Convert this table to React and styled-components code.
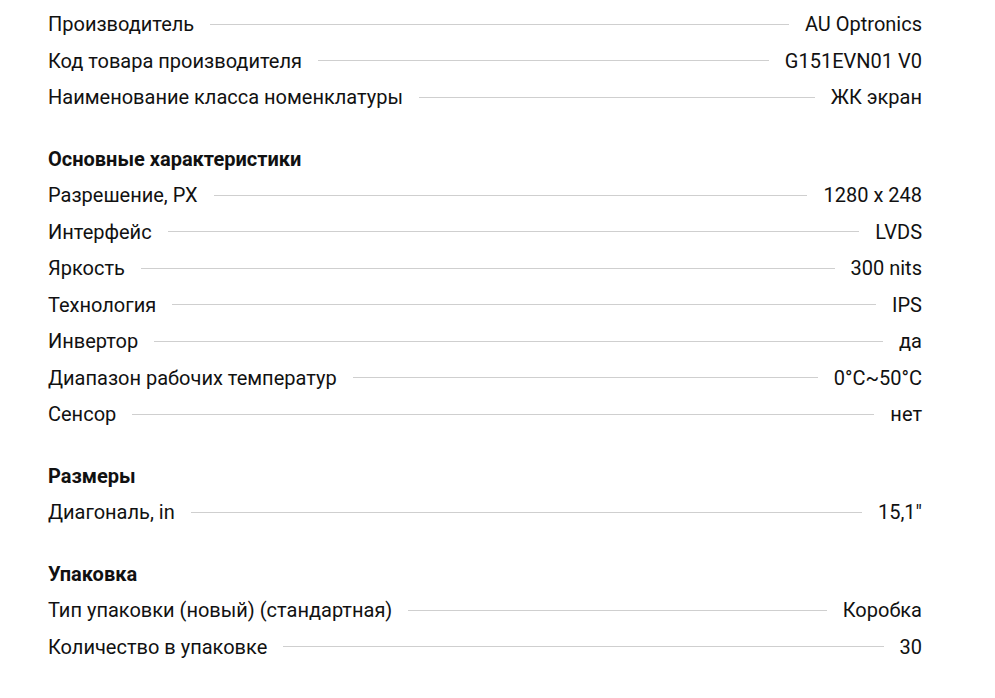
import React from 'react';
import styled, {createGlobalStyle} from 'styled-components';

const GlobalStyle = createGlobalStyle`
  body {
    margin:0;
    background:#fff;
    font-family:Roboto, "Noto Sans", sans-serif;
    color:#111;
  }
`;

const Specs = styled.div`
  width:874px;
  margin-left:48px;
  padding-top:6px;
`;

const Group = styled.section`
  & + & {
    margin-top:25px;
  }
`;

const Heading = styled.div`
  height:36.5px;
  display:flex;
  align-items:center;
  font-size:20px;
  font-weight:bold;
`;

const Row = styled.div`
  height:36.5px;
  display:flex;
  align-items:center;
  font-size:20px;
  white-space:nowrap;
`;

const Dots = styled.span`
  flex:1;
  height:1px;
  margin:0 16px;
  background:#cfcfcf;
`;

const groups = [
  {
    rows: [
      ['Производитель', 'AU Optronics'],
      ['Код товара производителя', 'G151EVN01 V0'],
      ['Наименование класса номенклатуры', 'ЖК экран'],
    ]
  },
  {
    title: 'Основные характеристики',
    rows: [
      ['Разрешение, PX', '1280 x 248'],
      ['Интерфейс', 'LVDS'],
      ['Яркость', '300 nits'],
      ['Технология', 'IPS'],
      ['Инвертор', 'да'],
      ['Диапазон рабочих температур', '0°C~50°C'],
      ['Сенсор', 'нет'],
    ]
  },
  {
    title: 'Размеры',
    rows: [
      ['Диагональ, in', '15,1"'],
    ]
  },
  {
    title: 'Упаковка',
    rows: [
      ['Тип упаковки (новый) (стандартная)', 'Коробка'],
      ['Количество в упаковке', '30'],
    ]
  },
];

const App = () => {
  return(
    <>
      <GlobalStyle />
      <Specs>
        {groups.map((g, i) => (
          <Group key={i}>
            {g.title && <Heading>{g.title}</Heading>}
            {g.rows.map(([name, value]) => (
              <Row key={name}>
                <span>{name}</span>
                <Dots />
                <span>{value}</span>
              </Row>
            ))}
          </Group>
        ))}
      </Specs>
    </>
  )
}

export default App;
